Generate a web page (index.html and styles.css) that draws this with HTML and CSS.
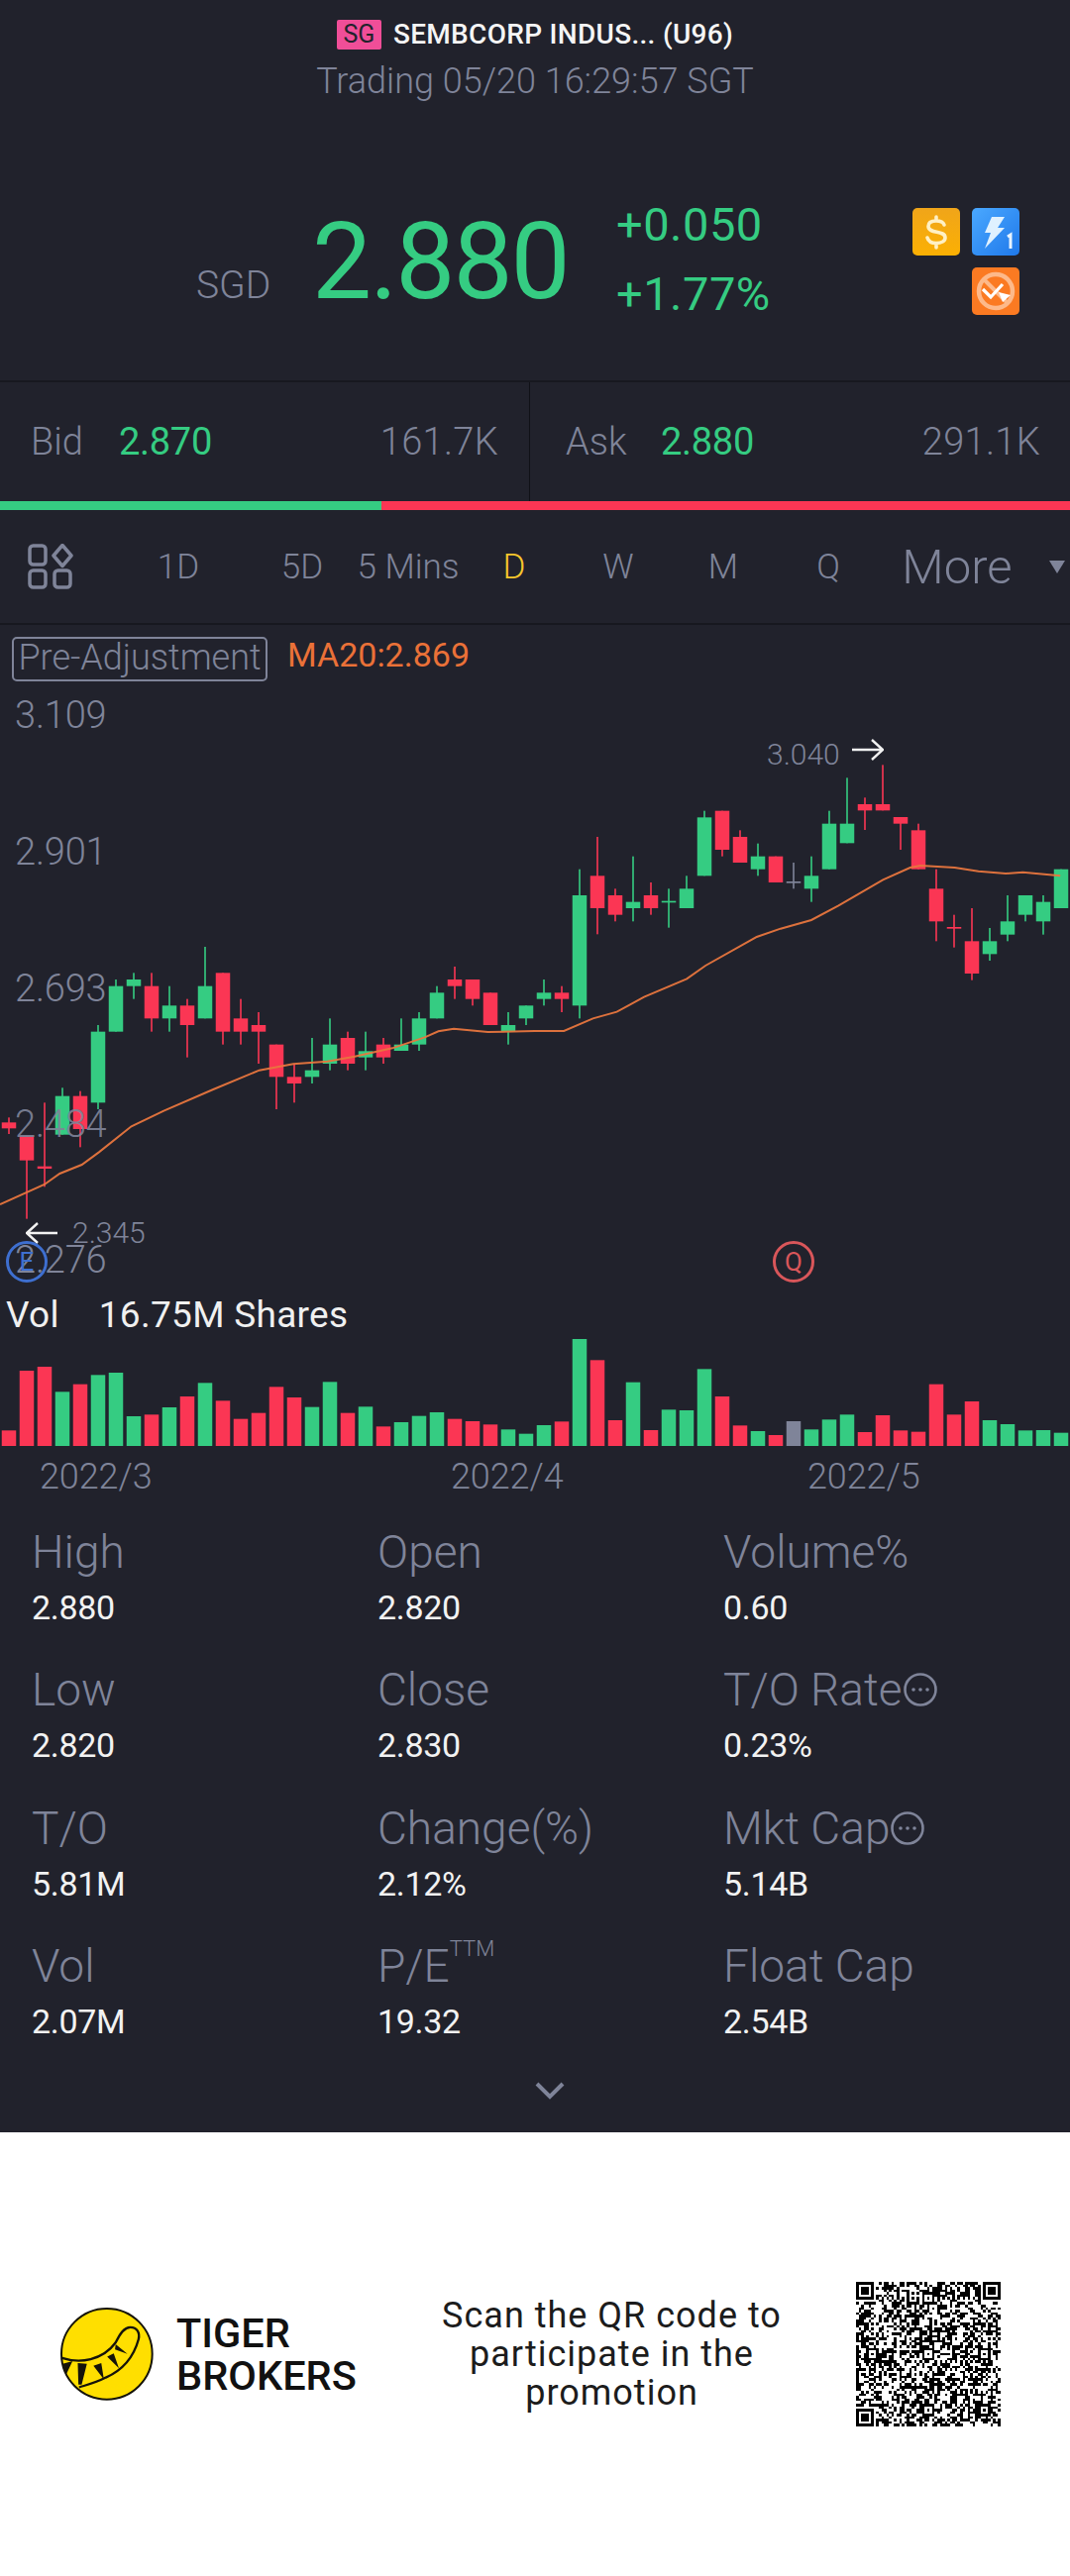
FILE: index.html
```html
<!DOCTYPE html>
<html lang="en">
<head>
<meta charset="utf-8">
<title>SEMBCORP INDUS... (U96)</title>
<link rel="stylesheet" href="styles.css">
</head>
<body>
<main class="quote">
  <header class="head">
    <div class="title-row"><span class="market">SG</span><h1 class="title">SEMBCORP INDUS... (U96)</h1></div>
    <p class="status">Trading 05/20 16:29:57 SGT</p>
    <div class="price-row">
      <span class="currency">SGD</span>
      <span class="price">2.880</span>
      <div class="change"><span>+0.050</span><span>+1.77%</span></div>
      <div class="flags">
        <svg class="flag" viewBox="0 0 48 48"><defs><linearGradient id="fa" x1="0" y1="0" x2="0" y2="1"><stop offset="0" stop-color="#f0a51a"/><stop offset="1" stop-color="#fbb003"/></linearGradient></defs><rect width="48" height="48" rx="5" fill="url(#fa)"/><path d="M32 17c-1-3-4-4-8-4-5 0-8 2-8 5.500 0 8 17 3.500 17 11.500 0 3.500-4 5.500-9 5.500-5 0-8-2-9-5.500M24 9v4M24 36v4" fill="none" stroke="#fff0c4" stroke-width="3.600" stroke-linecap="round"/></svg>
        <svg class="flag" viewBox="0 0 48 48"><defs><linearGradient id="fb" x1="0" y1="0" x2="1" y2="1"><stop offset="0" stop-color="#4aa8ff"/><stop offset="1" stop-color="#1f78ea"/></linearGradient></defs><rect width="48" height="48" rx="5" fill="url(#fb)"/><path d="M20 9h13l-7 11h7L13 41l6-16h-6z" fill="#dff1ff"/><path d="M36 29l3-2v14" fill="none" stroke="#e8f4ff" stroke-width="3"/></svg>
        <svg class="flag flag-last" viewBox="0 0 48 48"><rect width="48" height="48" rx="5" fill="#fb7a22"/><circle cx="24" cy="24" r="17" fill="none" stroke="#fdb98a" stroke-width="4.500"/><path d="M12 12l24 24" stroke="#fdb98a" stroke-width="4"/><path d="M11 22l8 8 12-13" fill="none" stroke="#fff" stroke-width="3.200"/><path d="M27 25l12 3-8 7z" fill="#fff"/></svg>
      </div>
    </div>
  </header>

  <section class="book">
    <div class="side side-bid"><span class="side-label side-label-bid">Bid</span><span class="side-price">2.870</span><span class="side-qty">161.7K</span></div>
    <div class="side side-ask"><span class="side-label side-label-ask">Ask</span><span class="side-price">2.880</span><span class="side-qty">291.1K</span></div>
  </section>
  <div class="ratio"><span class="ratio-bid"></span><span class="ratio-ask"></span></div>

  <nav class="tabs">
    <svg class="tab-icon" viewBox="0 0 46 46" aria-label="Layout"><g fill="none" stroke="#7f8499" stroke-width="3.500"><rect x="2" y="2" width="16" height="19" rx="3.500"/><path d="M35 1.500 44 12 35 22.500 26 12Z" stroke-linejoin="round"/><rect x="2" y="27" width="16" height="17" rx="3.500"/><rect x="27" y="27" width="16" height="17" rx="3.500"/></g></svg>
    <span class="tab">1D</span><span class="tab">5D</span><span class="tab">5 Mins</span><span class="tab tab-on">D</span><span class="tab">W</span><span class="tab">M</span><span class="tab">Q</span><span class="tab tab-more">More</span><span class="tab-caret"></span>
  </nav>

  <section class="chart">
    <svg id="plot" class="plot" viewBox="0 -27 1080 2487" preserveAspectRatio="none"></svg>
    <span class="adj">Pre-Adjustment</span><span class="ma">MA20:2.869</span>
    <span class="axis axis-1">3.109</span><span class="axis axis-2">2.901</span><span class="axis axis-3">2.693</span><span class="axis axis-4">2.484</span><span class="axis axis-5">2.276</span>
    <span class="extreme extreme-high">3.040</span>
    <svg class="arrow arrow-high" viewBox="0 0 32 22"><path d="M0 11H30M20 1 31 11 20 21" fill="none" stroke="#f2f2f2" stroke-width="2.400"/></svg>
    <svg class="arrow arrow-low" viewBox="0 0 32 22"><path d="M32 11H2M12 1 1 11 12 21" fill="none" stroke="#f2f2f2" stroke-width="2.400"/></svg>
    <span class="extreme extreme-low">2.345</span>
    <span class="marker marker-e">E</span><span class="marker marker-q">Q</span>
    <p class="vol"><span>Vol</span><span>16.75M Shares</span></p>
  </section>

  <div class="dates"><span class="date date-1">2022/3</span><span class="date date-2">2022/4</span><span class="date date-3">2022/5</span></div>

  <section class="stats">
    <div class="stat"><span class="stat-k">High</span><span class="stat-v">2.880</span></div>
    <div class="stat"><span class="stat-k">Open</span><span class="stat-v">2.820</span></div>
    <div class="stat"><span class="stat-k">Volume%</span><span class="stat-v">0.60</span></div>
    <div class="stat"><span class="stat-k">Low</span><span class="stat-v">2.820</span></div>
    <div class="stat"><span class="stat-k">Close</span><span class="stat-v">2.830</span></div>
    <div class="stat"><span class="stat-k">T/O Rate<svg class="more" viewBox="0 0 36 36"><circle cx="18" cy="18" r="15.500" fill="none" stroke="#7f8499" stroke-width="2.600"/><circle cx="11" cy="18" r="1.800" fill="#7f8499"/><circle cx="18" cy="18" r="1.800" fill="#7f8499"/><circle cx="25" cy="18" r="1.800" fill="#7f8499"/></svg></span><span class="stat-v">0.23%</span></div>
    <div class="stat"><span class="stat-k">T/O</span><span class="stat-v">5.81M</span></div>
    <div class="stat"><span class="stat-k">Change(%)</span><span class="stat-v">2.12%</span></div>
    <div class="stat"><span class="stat-k">Mkt Cap<svg class="more" viewBox="0 0 36 36"><circle cx="18" cy="18" r="15.500" fill="none" stroke="#7f8499" stroke-width="2.600"/><circle cx="11" cy="18" r="1.800" fill="#7f8499"/><circle cx="18" cy="18" r="1.800" fill="#7f8499"/><circle cx="25" cy="18" r="1.800" fill="#7f8499"/></svg></span><span class="stat-v">5.14B</span></div>
    <div class="stat"><span class="stat-k">Vol</span><span class="stat-v">2.07M</span></div>
    <div class="stat"><span class="stat-k">P/E<sup class="ttm">TTM</sup></span><span class="stat-v">19.32</span></div>
    <div class="stat"><span class="stat-k">Float Cap</span><span class="stat-v">2.54B</span></div>
  </section>
  <div class="expand"><svg class="chevron" viewBox="0 0 30 18"><path d="M2 2 15 15 28 2" fill="none" stroke="#7f8499" stroke-width="4"/></svg></div>
</main>

<footer class="promo">
  <svg class="logo" viewBox="181 208 285 285" aria-label="Tiger Brokers logo">
    <circle cx="323" cy="350" r="139" fill="#ffdf00" stroke="#15130a" stroke-width="6"/>
    <path d="M186 362C240 380 310 370 350 315 362 290 375 268 395 268 415 268 425 285 420 305 405 360 370 400 320 422 290 438 260 445 238 452" fill="none" stroke="#15130a" stroke-width="7"/>
    <path d="M188 380 218 372 198 414ZM234 378 262 380 246 444 236 444ZM282 386 306 378 314 428ZM324 358 344 348 360 394ZM350 320 386 350 348 336Z" fill="#15130a"/>
  </svg>
  <div class="brand">TIGER<br>BROKERS</div>
  <p class="scan">Scan the QR code to participate in the promotion</p>
  <svg id="qr" class="qr" viewBox="0 0 57 57" shape-rendering="crispEdges" aria-label="QR code"></svg>
</footer>
<script src="chart.js"></script>
</body>
</html>
```
FILE: styles.css
```css
* { box-sizing: border-box; }
html, body { margin: 0; padding: 0; background: #fff; }
body { width: 1080px; font-family: Roboto, "Liberation Sans", sans-serif; font-weight: 300; color: #7f8499; }
h1, p { margin: 0; font: inherit; }

.quote { background: #21222c; height: 2153px; display: flex; flex-direction: column; }

.head { height: 384px; padding-top: 20px; display: flex; flex-direction: column; align-items: center; }
.title-row { display: flex; align-items: center; gap: 12px; height: 30px; }
.market { width: 45px; height: 30px; border-radius: 2px; background: #f04e98; color: #21222c; font-size: 25px; line-height: 30px; text-align: center; font-weight: 400; }
.title { color: #f5f5f5; font-size: 28px; font-weight: 500; line-height: 30px; white-space: nowrap; letter-spacing: 0.3px; }
.status { margin-top: 12px; font-size: 36px; line-height: 40px; }
.price-row { align-self: stretch; margin-top: 108px; padding: 0 51px 0 198px; display: flex; align-items: flex-start; height: 120px; }
.currency { width: 117px; padding-top: 55px; font-size: 39px; line-height: 46px; }
.price { width: 307px; color: #35cc82; font-size: 107px; line-height: 120px; font-weight: 400; letter-spacing: -2px; margin-top: -5px; }
.change { display: flex; flex-direction: column; color: #35cc82; font-size: 47px; font-weight: 400; line-height: 70px; margin-top: -18px; letter-spacing: 0.5px; }
.flags { margin-left: auto; width: 108px; display: flex; flex-wrap: wrap; gap: 12px; justify-content: flex-end; }
.flag { width: 48px; height: 48px; display: block; }

.book { height: 122px; display: flex; border-top: 2px solid #17181f; }
.side { display: flex; align-items: center; font-size: 38px; }
.side-bid { width: 534px; padding: 0 31px 0 31px; }
.side-ask { flex: 1; padding: 0 30px 0 36px; border-left: 1px solid #101117; }
.side-label { display: block; }
.side-label-bid { width: 89px; }
.side-label-ask { width: 96px; }
.side-price { color: #35cc82; font-weight: 400; letter-spacing: -0.3px; }
.side-qty { margin-left: auto; letter-spacing: 0.3px; }
.ratio { height: 9px; display: flex; }
.ratio-bid { width: 385px; background: #35cc82; }
.ratio-ask { flex: 1; background: #fb3654; }

.tabs { height: 116px; display: grid; grid-template-columns: 102px 156px 94px 120px 94px 116px 96px 116px 144px 42px; align-items: center; border-bottom: 2px solid #17181f; justify-items: center; }
.tab-icon { width: 46px; height: 46px; }
.tab { font-size: 35px; white-space: nowrap; }
.tab-on { color: #f7c72c; }
.tab-more { font-size: 49px; }
.tab-caret { justify-self: end; margin-right: 5px; width: 0; height: 0; border-left: 8px solid transparent; border-right: 8px solid transparent; border-top: 13px solid #7f8499; }

.chart { position: relative; height: 829px; }
.plot { position: absolute; left: 0; top: 0; width: 1080px; height: 829px; display: block; }
.adj { position: absolute; left: 12px; top: 12px; width: 258px; height: 45px; border: 2px solid #7f8499; border-radius: 5px; font-size: 36px; line-height: 38px; text-align: center; white-space: nowrap; }
.ma { position: absolute; left: 290px; top: 8px; color: #ea7138; font-size: 34px; line-height: 44px; font-weight: 400; }
.axis { position: absolute; left: 15px; font-size: 38px; line-height: 44px; letter-spacing: -0.2px; }
.axis-1 { top: 69px; }
.axis-2 { top: 207px; }
.axis-3 { top: 345px; }
.axis-4 { top: 482px; color: rgba(127, 132, 153, 0.92); }
.axis-5 { top: 619px; }
.extreme { position: absolute; font-size: 30px; line-height: 36px; }
.extreme-high { left: 774px; top: 113px; }
.extreme-low { left: 73px; top: 596px; }
.arrow { position: absolute; width: 32px; height: 22px; }
.arrow-high { left: 860px; top: 115px; }
.arrow-low { left: 26px; top: 603px; }
.marker { position: absolute; top: 622px; width: 42px; height: 42px; border-radius: 50%; border: 3px solid; font-size: 26px; line-height: 36px; text-align: center; font-weight: 400; }
.marker-e { left: 6px; color: #3e6fd0; }
.marker-q { left: 780px; color: #d9565a; }
.vol { position: absolute; left: 6px; top: 674px; display: flex; gap: 40px; color: #f0f0f0; font-size: 37px; line-height: 46px; letter-spacing: 0.3px; font-weight: 400; }

.dates { position: relative; height: 78px; }
.date { position: absolute; top: 8px; font-size: 36px; line-height: 46px; letter-spacing: -0.1px; }
.date-1 { left: 40px; }
.date-2 { left: 455px; }
.date-3 { left: 815px; }

.stats { display: grid; grid-template-columns: repeat(3, 349px); row-gap: 27.300px; padding-left: 32px; }
.stat { display: flex; flex-direction: column; height: 112px; }
.stat-k { display: flex; align-items: center; height: 58px; font-size: 46px; white-space: nowrap; }
.stat-v { height: 54px; line-height: 54px; font-size: 34px; color: #f2f2f2; font-weight: 400; letter-spacing: -0.3px; }
.more { width: 36px; height: 36px; margin-left: 0; }
.ttm { font-size: 22px; line-height: 22px; align-self: flex-start; margin-top: 1px; }

.expand { flex: 1; display: flex; justify-content: center; padding: 1px 0 0 30px; align-items: center; }
.chevron { width: 30px; height: 18px; }

.promo { height: 448px; display: flex; align-items: center; padding: 0 70px 0 61px; background: #fff; }
.logo { width: 94px; height: 94px; flex: none; }
.brand { margin-left: 23px; width: 267px; color: #111; font-size: 41.500px; line-height: 43px; font-weight: 500; }
.scan { width: 345px; color: #1c1c1c; font-size: 36px; line-height: 39px; text-align: center; font-weight: 400; letter-spacing: 1px; }
.qr { margin-left: auto; width: 146px; height: 146px; flex: none; }
```
FILE: chart.js
```js
var SVG = "http://www.w3.org/2000/svg";
var COLORS = { g: "#35cc82", r: "#fb3654", n: "#7f8499" };
function add(parent, name, attrs) {
  var el = document.createElementNS(SVG, name);
  for (var k in attrs) el.setAttribute(k, attrs[k]);
  parent.appendChild(el);
}

// colour, wick top, body top, body bottom, wick bottom (chart units: 3 per px)
var candles = [
  ["r",1465,1480,1498,1515],["r",1522,1522,1595,1772],["r",1420,1613,1620,1675],["g",1375,1400,1517,1517],
  ["r",1385,1400,1500,1555],["g",1185,1205,1420,1440],["g",1047,1067,1205,1205],["g",1027,1047,1067,1106],
  ["r",1027,1067,1165,1205],["g",1067,1126,1165,1205],["r",1106,1126,1185,1283],["g",948,1067,1165,1165],
  ["r",1027,1027,1205,1244],["r",1106,1165,1205,1244],["r",1146,1185,1205,1302],["r",1244,1244,1342,1440],
  ["r",1302,1342,1362,1420],["g",1224,1322,1342,1362],["g",1165,1244,1302,1322],["r",1205,1224,1302,1322],
  ["g",1205,1264,1283,1322],["r",1224,1244,1283,1302],["g",1165,1244,1263,1263],["g",1146,1165,1244,1263],
  ["g",1067,1087,1165,1165],["r",1008,1047,1067,1106],["r",1047,1047,1106,1126],["r",1087,1087,1185,1185],
  ["g",1146,1185,1205,1244],["g",1126,1126,1165,1185],
  ["g",1047,1087,1106,1126],["r",1067,1087,1106,1146],["g",713,792,1126,1165],["r",615,733,831,910],
  ["r",772,792,851,871],["g",674,812,831,871],["r",753,792,831,851],["g",772,809,814,890],
  ["g",733,772,831,831],["g",536,556,733,733],["r",536,536,654,674],["r",595,615,693,693],
  ["g",635,674,713,733],["r",674,674,753,753],["n",693,750,755,772],["g",674,733,772,812],
  ["g",536,575,713,713],["g",436,575,634,634],["r",496,516,535,594],["r",397,516,535,535],
  ["r",555,555,575,654],["r",575,595,713,713],["r",713,772,871,931],["r",851,888,893,950],
  ["r",831,931,1029,1049],["g",891,931,970,990],["g",792,871,911,931],["g",792,792,851,871],
  ["g",792,812,871,911],["g",713,713,831,831]
];
// colour letter per bar and the bar's top (chart units)
var volColors = "rrrgrgggrgrgrrrrrggrgrgggrrrgg" + "grgrrgrgggrrgrngggrrrrrrrggggg";
var volTops = [1033,852,840,916,893,865,858,990,985,963,930,889,943,998,980,901,933,962,886,980,961,1021,1008,989,978,998,1005,1015,1030,1043,
  1017,1006,756,820,1002,887,1032,970,972,847,930,1018,1035,1047,1005,1030,1000,985,1038,987,1033,1037,893,985,945,1002,1014,1033,1032,1040];
// moving average: x in px, y in chart units
var S = 2.904;
var ma = [[0,1728],[130,1668],[175,1635],[240,1608],[290,1570],[385,1492],[480,1445],[625,1380],[760,1322],[860,1303],[960,1295],[1040,1280],[1150,1255],[1245,1222],[1285,1204],[1330,1196],[1430,1206],[1568,1203],
  [1653,1203],[1738,1165],[1808,1145],[1888,1100],[2013,1045],[2068,1005],[2218,918],[2288,893],[2378,867],[2458,823],[2588,745],[2668,708],[2698,702],[2798,708],[2868,719],[2948,726],[2998,722],[3108,733]];

var plot = document.getElementById("plot");
candles.forEach(function (c, i) {
  var cx = 9 + 18 * i, color = COLORS[c[0]];
  add(plot, "rect", { x: cx - 0.8, y: c[1], width: 1.6, height: c[4] - c[1], fill: color });
  add(plot, "rect", { x: cx - 7.25, y: c[2], width: 14.5, height: c[3] - c[2], fill: color });
});
add(plot, "polyline", {
  points: ma.map(function (p) { return (p[0] / S).toFixed(1) + "," + p[1]; }).join(" "),
  fill: "none", stroke: "#e8763e", "stroke-width": 2, "vector-effect": "non-scaling-stroke", "stroke-opacity": 0.95
});
volTops.forEach(function (t, i) {
  add(plot, "rect", { x: 1.75 + 18 * i, y: t + 1380, width: 14.5, height: 1080 - t, fill: COLORS[volColors[i]] });
});

// QR symbol: fixed patterns of a version 10 code, deterministic data modules
var N = 57, grid = [], seed = 20220520;
function next() { seed = (seed * 1103515245 + 12345) & 0x7fffffff; return (seed >> 16) & 1; }
for (var y = 0; y < N; y++) { grid.push([]); for (var x = 0; x < N; x++) grid[y].push(next()); }
function square(x0, y0, size, outer) {
  var pad = outer ? 1 : 0;
  for (var y = y0 - pad; y < y0 + size + pad; y++) for (var x = x0 - pad; x < x0 + size + pad; x++) {
    if (y < 0 || x < 0 || y >= N || x >= N) continue;
    var d = Math.max(Math.abs(x - x0 - (size - 1) / 2), Math.abs(y - y0 - (size - 1) / 2));
    if (size === 7) grid[y][x] = (d === 3 || d <= 1) ? 1 : 0;
    else grid[y][x] = (d === 2 || d === 0) ? 1 : 0;
  }
}
for (var t = 8; t < N - 8; t++) { grid[6][t] = t % 2 ? 0 : 1; grid[t][6] = t % 2 ? 0 : 1; }
[6, 28, 50].forEach(function (a) { [6, 28, 50].forEach(function (b) {
  if ((a === 6 && b === 6) || (a === 6 && b === 50) || (a === 50 && b === 6)) return;
  square(a - 2, b - 2, 5, false);
}); });
square(0, 0, 7, true); square(50, 0, 7, true); square(0, 50, 7, true);
var d = "";
grid.forEach(function (row, y) { row.forEach(function (on, x) { if (on) d += "M" + x + " " + y + "h1v1h-1z"; }); });
add(document.getElementById("qr"), "path", { d: d, fill: "#000" });
```
